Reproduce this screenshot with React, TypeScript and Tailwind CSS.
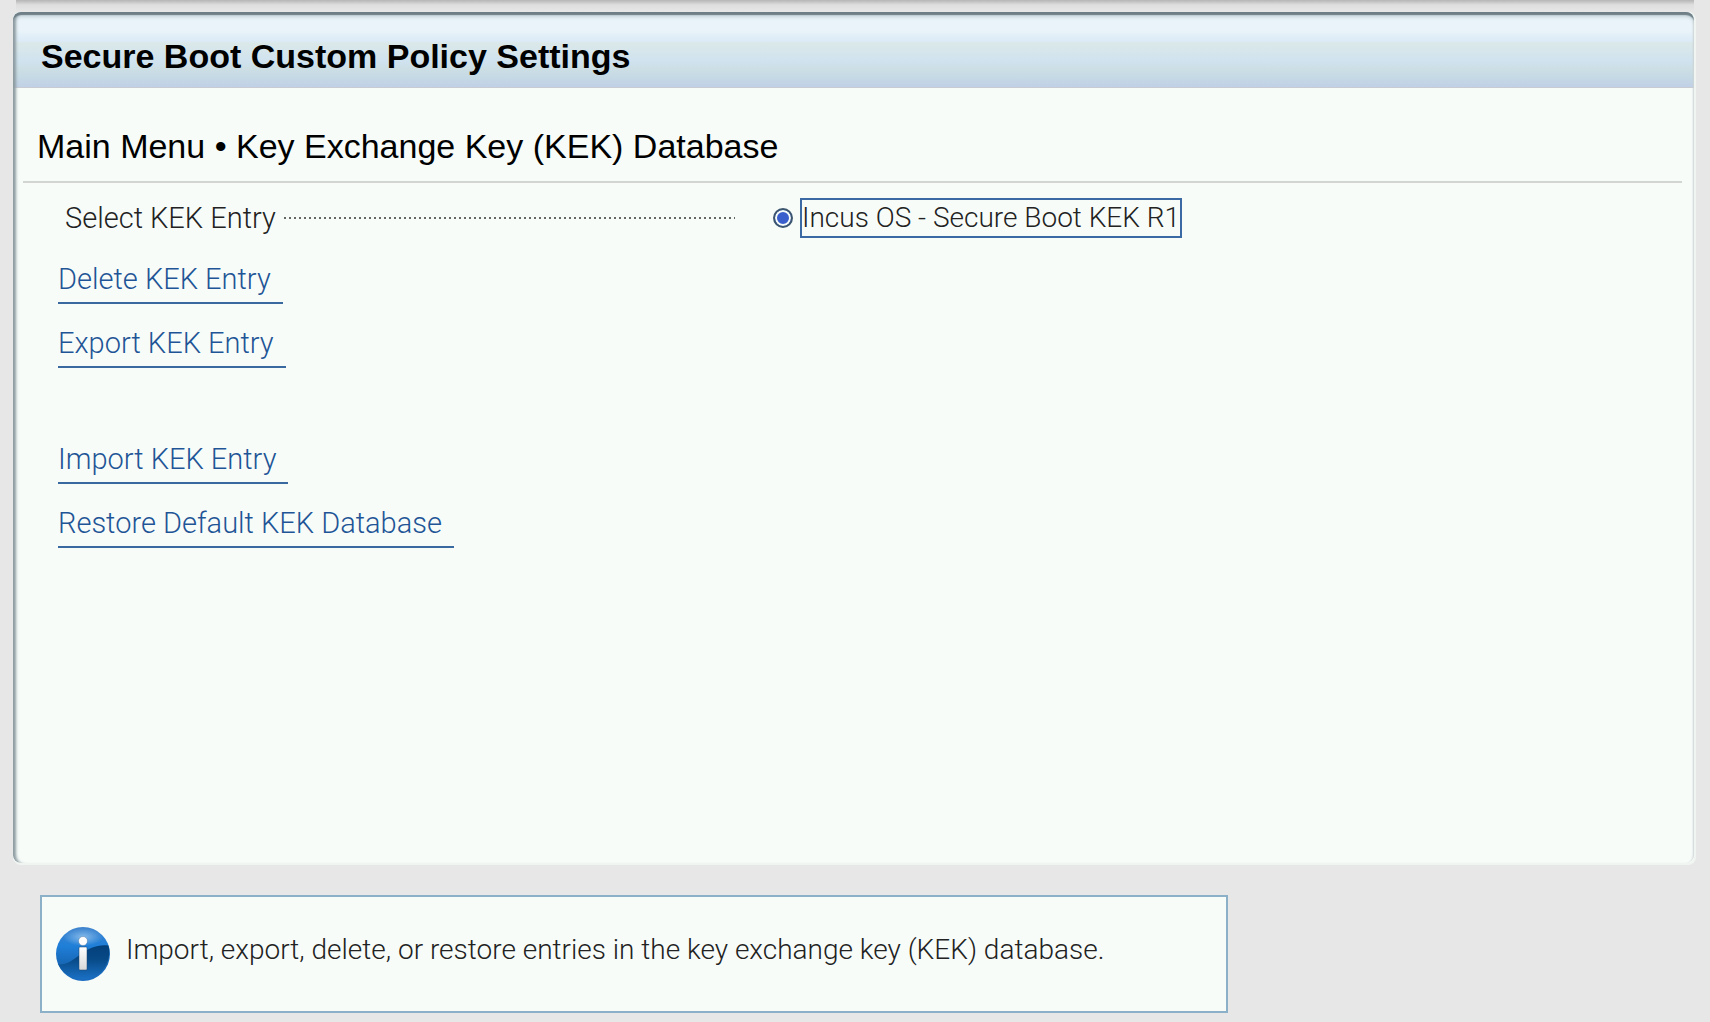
import React, { type FC } from 'react';

type LinkProps = {
  label: string;
};

const MenuLink: FC<LinkProps> = ({ label }) => (
  <a
    href="#"
    className="h-12 pr-3 flex items-center border-b-2 border-[#39699f] text-[#1f5596] whitespace-nowrap"
  >
    {label}
  </a>
);

const InfoIcon: FC = () => (
  <svg width="54" height="54" viewBox="0 0 54 54" className="shrink-0" aria-hidden="true">
    <defs>
      <linearGradient id="orb" x1="0" y1="0" x2="0" y2="1">
        <stop offset="0" stopColor="#3f83cc" />
        <stop offset="0.35" stopColor="#1f7fd8" />
        <stop offset="0.7" stopColor="#1766b4" />
        <stop offset="1" stopColor="#1a6cc0" />
      </linearGradient>
      <linearGradient id="shade" x1="0" y1="0" x2="0" y2="1">
        <stop offset="0" stopColor="#03407a" />
        <stop offset="0.4" stopColor="#074986" />
        <stop offset="1" stopColor="#1a70c4" />
      </linearGradient>
      <radialGradient id="gloss" cx="0.5" cy="0.5" r="0.5">
        <stop offset="0" stopColor="#a9d2f5" stopOpacity="0.7" />
        <stop offset="1" stopColor="#a9d2f5" stopOpacity="0" />
      </radialGradient>
      <linearGradient id="stem" x1="0" y1="0" x2="0" y2="1">
        <stop offset="0" stopColor="#ffffff" />
        <stop offset="1" stopColor="#d8d8d8" />
      </linearGradient>
    </defs>
    <circle cx="27" cy="27" r="27" fill="url(#orb)" />
    <path
      d="M2.300 37.500C11 38 17 33 25 27C33 21 42 17 52.500 18.500A27 27 0 0 1 2.300 37.500Z"
      fill="url(#shade)"
    />
    <ellipse cx="27" cy="10" rx="20" ry="9" fill="url(#gloss)" />
    <circle cx="27" cy="14" r="4.500" fill="#fff" stroke="#2c5f94" strokeOpacity="0.4" />
    <rect x="23" y="20" width="8" height="23" rx="1" fill="url(#stem)" stroke="#1c4470" strokeOpacity="0.5" />
  </svg>
);

const App: FC = () => {
  return (
    <div className="min-h-screen bg-[#e7e7e7] flex flex-col font-['Liberation_Sans',Arial,sans-serif] text-[#222]">
      {/* Shadow under the banner above the panel */}
      <div className="h-3 mx-4 bg-gradient-to-b from-[#b5b5b5] via-[#dedede] via-40% to-[#e7e7e7]"></div>

      <main className="flex-1 ml-[13px] mr-[14px] rounded-lg bg-[#f7fcf9] border-b-2 border-r-2 border-[#f1f5f2] overflow-hidden relative">
        <header className="h-[76px] px-7 pt-[14px] flex items-center border-b border-[#c9cbd2] bg-linear-[180deg,#e9f3f9_0%,#e9f3f9_25%,#dcebf7_38%,#dbe8e9_42%,#d6e6ec_52%,#cfe2ef_66%,#cddee4_76%,#c6dae5_86%,#c0d0e6_100%]">
          <h1 className="text-[34px] font-bold text-black whitespace-nowrap">
            Secure Boot Custom Policy Settings
          </h1>
        </header>

        <div className="pl-[10px] pr-3 font-light font-[Roboto,'Liberation_Sans',sans-serif] text-[29px] leading-8">
          <h2 className="h-[95px] px-[14px] pt-[22px] flex items-center font-normal font-['Liberation_Sans',Arial,sans-serif] text-[34px] text-black border-b-2 border-[#d3d5d3] whitespace-nowrap">
            Main Menu • Key Exchange Key (KEK) Database
          </h2>

          <div role="radiogroup" aria-label="Select KEK Entry" className="mt-[15px] pl-[42px] h-10 flex items-center">
            <div className="w-[670px] flex items-center gap-2">
              <span className="whitespace-nowrap">Select KEK Entry</span>
              <span className="flex-1 h-[2px] bg-[repeating-linear-gradient(90deg,#666_0px,#666_2px,transparent_2px,transparent_5px)]"></span>
            </div>
            <label className="ml-[38px] flex items-center gap-[7px] text-[28px]">
              <input
                type="radio"
                name="kek"
                defaultChecked
                className="appearance-none size-5 shrink-0 rounded-full border-2 border-[#3d5670] bg-[#3a5fcd] shadow-[inset_0_0_0_2px_#f7fcf9]"
              />
              <span className="h-10 border-2 border-[#3b69a3] flex items-center whitespace-nowrap">
                Incus OS - Secure Boot KEK R1
              </span>
            </label>
          </div>

          <nav className="mt-[18px] pl-[35px] flex flex-col items-start gap-4">
            <MenuLink label="Delete KEK Entry" />
            <MenuLink label="Export KEK Entry" />
            <div className="h-9"></div>
            <MenuLink label="Import KEK Entry" />
            <MenuLink label="Restore Default KEK Database" />
          </nav>
        </div>

        {/* Inner bevel */}
        <div className="absolute inset-0 rounded-lg pointer-events-none shadow-[inset_0_4px_1px_-1px_#6f7f87,inset_5px_0_3px_-2px_#8d9ba1,inset_0_7px_4px_-3px_#b4c3cb,inset_-3px_0_2px_-2px_#cfd6d6]"></div>
      </main>

      <footer className="px-10 pt-[30px] pb-[9px]">
        <div className="max-w-[1188px] h-[118px] px-[14px] flex items-center gap-4 border-2 border-[#8db0c9] bg-[#f7fcf9]">
          <InfoIcon />
          <p className="pb-2 font-light font-[Roboto,'Liberation_Sans',sans-serif] text-[28px] leading-8">
            Import, export, delete, or restore entries in the key exchange key (KEK) database.
          </p>
        </div>
      </footer>
    </div>
  );
};

export default App;
